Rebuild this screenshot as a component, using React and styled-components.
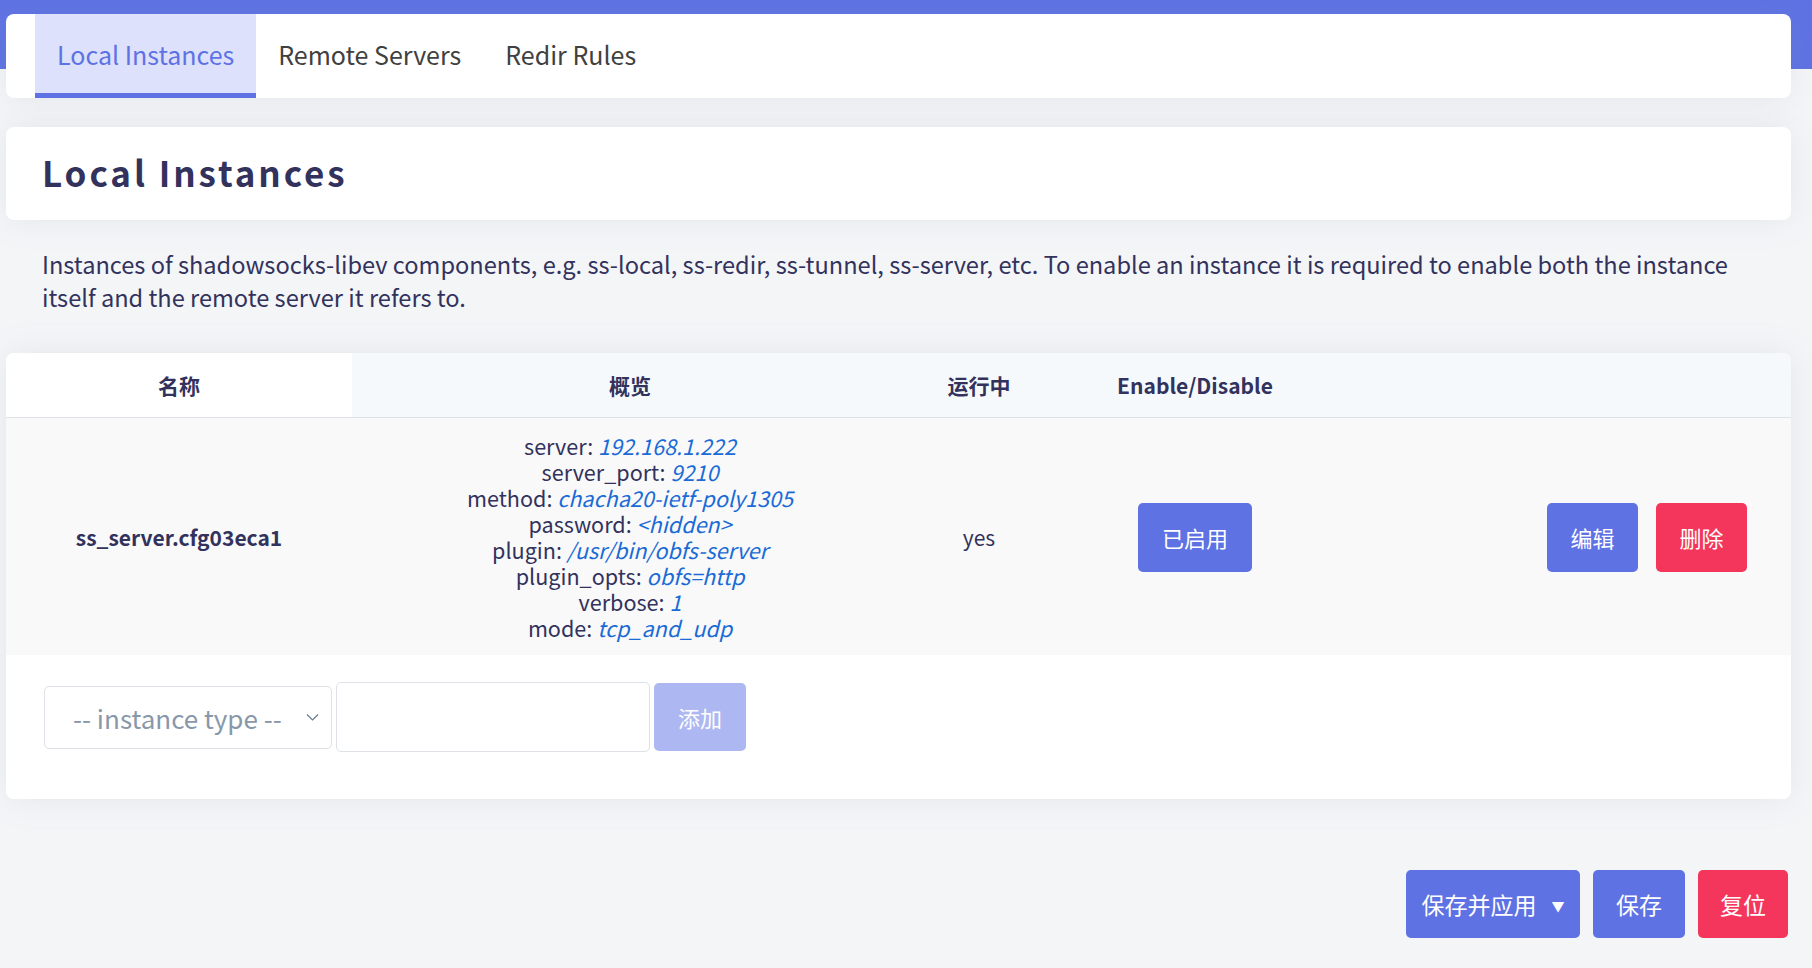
import React from 'react';
import styled, { createGlobalStyle } from 'styled-components';

const GlobalStyle = createGlobalStyle`
  html, body {
    margin: 0;
    padding: 0;
    background: #f4f5f7;
    font-family: "Noto Sans CJK SC", "Noto Sans", sans-serif;
    color: #32325d;
  }
`;

const Page = styled.div`
  min-height: 968px;
  background: linear-gradient(to bottom, #5e72e4 0, #5e72e4 69px, #f4f5f7 69px);
  padding: 14px 21px 0 6px;
  box-sizing: border-box;
`;

const Card = styled.div`
  background: #fff;
  border-radius: 8px;
  box-shadow: 0 0 2rem 0 rgba(136, 152, 170, 0.15);
`;

const TabBar = styled(Card)`
  display: flex;
  height: 84px;
  padding-left: 29px;
  overflow: hidden;
`;

const Tab = styled.div`
  display: flex;
  align-items: center;
  padding: 0 22px;
  font-size: 25px;
  box-sizing: border-box;
  color: ${p => (p.$active ? '#5e72e4' : '#404040')};
  background: ${p => (p.$active ? '#dde1fb' : 'transparent')};
  border-bottom: 5px solid ${p => (p.$active ? '#5e72e4' : 'transparent')};
`;

const TitleCard = styled(Card)`
  margin-top: 29px;
  height: 93px;
  display: flex;
  align-items: center;
  padding-left: 36px;
  padding-bottom: 4px;
  box-sizing: border-box;
`;

const Title = styled.h2`
  margin: 0;
  font-size: 35px;
  font-weight: 700;
  letter-spacing: 2.9px;
  color: #32325d;
`;

const Description = styled.p`
  margin: 0;
  padding: 28px 36px 39px;
  font-size: 23.6px;
  line-height: 33px;
  color: #32325d;
`;

const TableCard = styled(Card)`
  overflow: hidden;
`;

const Table = styled.table`
  width: 100%;
  border-collapse: collapse;
  table-layout: fixed;
`;

const Th = styled.th`
  height: 64px;
  padding: 0;
  font-size: 21px;
  font-weight: 700;
  color: #32325d;
  text-align: center;
  background: ${p => (p.$plain ? '#fff' : '#f6f9fc')};
  border-bottom: 1px solid #dee2e6;
`;

const BodyRow = styled.tr`
  background: #f9f9f9;
`;

const Td = styled.td`
  padding: 15px 0 14px;
  font-size: 21px;
  text-align: center;
  vertical-align: middle;
  color: #32325d;
`;

const NameCell = styled(Td)`
  font-weight: 700;
`;

const Overview = styled.div`
  font-size: 21.6px;
  line-height: 26px;
`;

const OverviewLine = styled.div`
  height: 26px;
`;

const Val = styled.var`
  font-style: italic;
  color: #1a6bd6;
`;

const ActionCell = styled(Td)`
  text-align: right;
  padding-right: 44px;
`;

const Btn = styled.button`
  font-family: inherit;
  font-size: ${p => p.$fs || 22}px;
  color: #fff;
  border: none;
  border-radius: 5px;
  height: ${p => p.$h || 69}px;
  width: ${p => p.$w}px;
  padding: 0;
  background: ${p => (p.$danger ? '#f5365c' : '#5e72e4')};
  opacity: ${p => (p.$disabled ? 0.5 : 1)};
  display: inline-flex;
  align-items: center;
  justify-content: center;
  gap: 15px;
  vertical-align: middle;
`;

const Caret = styled.span`
  font-size: 13px;
  line-height: 1;
  padding-top: 2px;
`;

const ActionGroup = styled.div`
  display: flex;
  justify-content: flex-end;
  gap: 18px;
`;

const AddRow = styled.div`
  display: flex;
  align-items: center;
  gap: 4px;
  height: 144px;
  padding: 0 0 20px 38px;
  box-sizing: border-box;
  background: #fff;
`;

const Select = styled.div`
  width: 288px;
  height: 63px;
  box-sizing: border-box;
  border: 1px solid #dee2e6;
  border-radius: 5px;
  display: flex;
  align-items: center;
  justify-content: space-between;
  padding: 0 12px 0 28px;
  font-size: 26px;
  color: #8898aa;
  background: #fff;
`;

const Input = styled.div`
  width: 314px;
  height: 70px;
  box-sizing: border-box;
  border: 1px solid #dee2e6;
  border-radius: 5px;
  background: #fff;
`;

const Footer = styled.div`
  display: flex;
  justify-content: flex-end;
  gap: 13px;
  padding: 71px 3px 0 0;
`;

export default function App() {
  const items = [
    ['server', '192.168.1.222'],
    ['server_port', '9210'],
    ['method', 'chacha20-ietf-poly1305'],
    ['password', '<hidden>'],
    ['plugin', '/usr/bin/obfs-server'],
    ['plugin_opts', 'obfs=http'],
    ['verbose', '1'],
    ['mode', 'tcp_and_udp'],
  ];
  return (
    <>
      <GlobalStyle />
      <Page>
        <TabBar>
          <Tab $active>Local Instances</Tab>
          <Tab>Remote Servers</Tab>
          <Tab>Redir Rules</Tab>
        </TabBar>
        <TitleCard>
          <Title>Local Instances</Title>
        </TitleCard>
        <Description>
          Instances of shadowsocks-libev components, e.g. ss-local, ss-redir, ss-tunnel, ss-server, etc. To enable an instance it is required to enable both the instance itself and the remote server it refers to.
        </Description>
        <TableCard>
          <Table>
            <colgroup>
              <col style={{ width: 346 }} />
              <col style={{ width: 556 }} />
              <col style={{ width: 142 }} />
              <col style={{ width: 290 }} />
              <col />
            </colgroup>
            <thead>
              <tr>
                <Th $plain>名称</Th>
                <Th>概览</Th>
                <Th>运行中</Th>
                <Th>Enable/Disable</Th>
                <Th></Th>
              </tr>
            </thead>
            <tbody>
              <BodyRow>
                <NameCell>ss_server.cfg03eca1</NameCell>
                <Td>
                  <Overview>
                    {items.map(([k, v]) => (
                      <OverviewLine key={k}>
                        {k}: <Val>{v}</Val>
                      </OverviewLine>
                    ))}
                  </Overview>
                </Td>
                <Td>yes</Td>
                <Td>
                  <Btn $w={114}>已启用</Btn>
                </Td>
                <ActionCell>
                  <ActionGroup>
                    <Btn $w={91}>编辑</Btn>
                    <Btn $w={91} $danger>删除</Btn>
                  </ActionGroup>
                </ActionCell>
              </BodyRow>
            </tbody>
          </Table>
          <AddRow>
            <Select>
              <span>-- instance type --</span>
              <svg width="13" height="9" viewBox="0 0 13 9">
                <path d="M1 1.5 L6.5 7 L12 1.5" fill="none" stroke="#6b7a90" strokeWidth="1.2" />
              </svg>
            </Select>
            <Input />
            <Btn $w={92} $h={68} $disabled>添加</Btn>
          </AddRow>
        </TableCard>
        <Footer>
          <Btn $w={174} $h={68} $fs={23}>
            <span>保存并应用</span>
            <Caret>▼</Caret>
          </Btn>
          <Btn $w={92} $h={68} $fs={23}>保存</Btn>
          <Btn $w={90} $h={68} $fs={23} $danger>复位</Btn>
        </Footer>
      </Page>
    </>
  );
}
